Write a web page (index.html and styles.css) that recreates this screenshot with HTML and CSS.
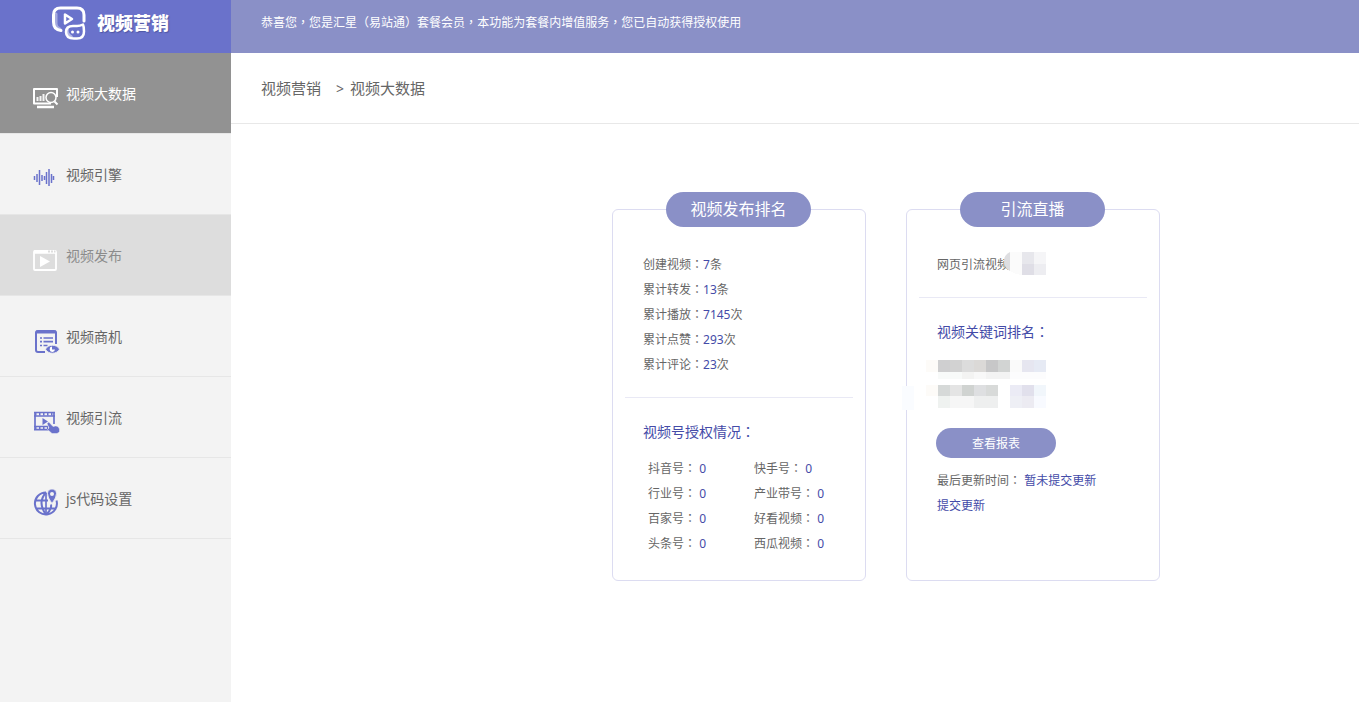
FILE: index.html
```html
<!DOCTYPE html>
<html lang="zh-CN">
<head>
<meta charset="utf-8">
<title>视频营销</title>
<link rel="stylesheet" href="styles.css">
</head>
<body>
<div class="app">
  <aside class="sidebar">
    <div class="brand">
      <svg class="brand-icon" width="36" height="36" viewBox="0 0 36 36" fill="none" stroke="#fff" stroke-width="3" stroke-linecap="round" stroke-linejoin="round">
        <path d="M10 25.500C5 25 2.500 22 2.500 17V10Q2.500 3 9.500 3H26Q33 3 33 10V16" />
        <path d="M5 9v10q0 3 4 5" opacity=".4"/>
        <path d="M14 9.500v9l7-4.500z" stroke-width="2.500"/>
        <path d="M22 21h4q3 0 6-1.500q1 2 1 7q0 7-7 7h-3q-8 0-8-6.500q0-6 7-6z" stroke-width="2.500"/>
        <path d="M16.500 24q-1 5 4 7.500" opacity=".5" stroke-width="2.500"/>
        <circle cx="21.500" cy="27" r="1.500" fill="#fff" stroke="none"/>
        <circle cx="27" cy="27" r="1.500" fill="#fff" stroke="none"/>
      </svg>
      <span class="brand-name">视频营销</span>
    </div>
    <nav class="menu">
      <a class="menu-item active" href="#">
        <svg class="menu-icon" viewBox="0 0 26 26" fill="none" stroke="#fff">
          <path d="M24 12V4H1v14.500h17" stroke-width="2" stroke-linejoin="round"/>
          <path d="M4.500 16v-4M7.500 16v-5M10.500 16V9" stroke-width="2" opacity=".9"/>
          <circle cx="18" cy="12.500" r="5" stroke-width="1.500"/>
          <path d="M21.500 16.500l3 3" stroke-width="2"/>
          <path d="M4 22h17" stroke-width="2.500"/>
        </svg>
        <span>视频大数据</span>
      </a>
      <a class="menu-item" href="#">
        <svg class="menu-icon" viewBox="0 0 26 26" fill="none" stroke="#6a72cb">
          <path d="M1.500 10v4M4 8v8M6.500 4v15M9 9v6M11.500 10v4M13.500 6v12M16 3v17M18.500 8v9M20.500 10v4" stroke-width="1.500"/>
        </svg>
        <span>视频引擎</span>
      </a>
      <a class="menu-item hover" href="#">
        <svg class="menu-icon" viewBox="0 0 26 26" fill="none" stroke="#fff">
          <rect x="1" y="4" width="22" height="19" rx="1" stroke-width="1.800"/>
          <path d="M1 5h22" stroke-width="3.500"/>
          <path d="M15 4.500h2M18 4.500h2M21 4.500h1.500" stroke="#ddd" stroke-width="1.800"/>
          <path d="M7 9v11l10-5.500z" fill="#fff" stroke="none"/>
        </svg>
        <span>视频发布</span>
      </a>
      <a class="menu-item" href="#">
        <svg class="menu-icon" viewBox="0 0 26 26" fill="none" stroke="#6a72cb">
          <path d="M12 24H5q-2 0-2-2V4.500q0-1.500 2-1.500h16q2 0 2 1.500V16" stroke-width="2" stroke-linejoin="round"/>
          <path d="M3 4h20" stroke-width="3"/>
          <path d="M7 10h2M10.500 10h9.500M7 13.700h2M10.500 13.700h9.500M7 17.500h2M10.500 17.500h4" stroke-width="1.700"/>
          <path d="M12.500 21.200C15 16 24 16 26.500 21.200C24 26.500 15 26.500 12.500 21.200z" fill="#6a72cb" stroke="#f3f3f3" stroke-width=".8"/>
          <path d="M19 18.500a2.700 2.700 0 1 0 3 3h-3z" fill="#fff" stroke="none"/>
        </svg>
        <span>视频商机</span>
      </a>
      <a class="menu-item" href="#">
        <svg class="menu-icon" viewBox="0 0 26 26" fill="none" stroke="#6a72cb">
          <path d="M2 3v18M21 3v12M1 3.500h21M1 7h21M1 17.500h14M1 20.700h15" stroke-width="1.700"/>
          <path d="M2 5h19M2 19h13" stroke-width="3" stroke-dasharray="1.500 2.500"/>
          <path d="M9.500 9v7l5.500-3.500z" fill="#6a72cb" stroke="none"/>
          <path d="M14 14.500l1.800-1.500 4.200 4.500q5-2 6.500 2.500v2.500q-1 2-3 2h-4.500l-4.500-4 1.500-1.500z" fill="#6a72cb" stroke="#f3f3f3" stroke-width=".5"/>
        </svg>
        <span>视频引流</span>
      </a>
      <a class="menu-item" href="#">
        <svg class="menu-icon" viewBox="0 0 26 26" fill="none" stroke="#6a72cb">
          <path d="M13 2.500a11 11 0 1 0 10.500 8M2 10.500h13M3 18.500h20M13 2.500q-9 10 0 22M13 24.500q6-5 5-10" stroke-width="2"/>
          <path d="M13 2.500v22" stroke-width="1.700"/>
          <path d="M19-1a4.500 4.500 0 0 1 4.500 4.500Q23.500 7.500 19 13.500Q14.500 7.500 14.500 3.500A4.500 4.500 0 0 1 19-1z" fill="#6a72cb" stroke="#f3f3f3" stroke-width=".8"/>
          <circle cx="19" cy="4" r="2" fill="#f3f3f3" stroke="none"/>
        </svg>
        <span>js代码设置</span>
      </a>
    </nav>
  </aside>

  <div class="content">
    <header class="notice">恭喜您<i lang="zh-TW">，</i>您是汇星<i lang="zh-TW">（</i>易站通<i lang="zh-TW">）</i>套餐会员<i lang="zh-TW">，</i>本功能为套餐内增值服务<i lang="zh-TW">，</i>您已自动获得授权使用</header>
    <nav class="crumbs">
      <a href="#">视频营销</a><span class="sep">&gt;</span><span>视频大数据</span>
    </nav>

    <main class="cards">
      <section class="card">
        <h2 class="card-title">视频发布排名</h2>
        <ul class="stats">
          <li>创建视频<i lang="zh-TW">：</i><b>7</b>条</li>
          <li>累计转发<i lang="zh-TW">：</i><b>13</b>条</li>
          <li>累计播放<i lang="zh-TW">：</i><b>7145</b>次</li>
          <li>累计点赞<i lang="zh-TW">：</i><b>293</b>次</li>
          <li>累计评论<i lang="zh-TW">：</i><b>23</b>次</li>
        </ul>
        <hr>
        <h3>视频号授权情况<i lang="zh-TW">：</i></h3>
        <ul class="accounts">
          <li>抖音号<i lang="zh-TW">：</i> <b>0</b></li><li>快手号<i lang="zh-TW">：</i> <b>0</b></li>
          <li>行业号<i lang="zh-TW">：</i> <b>0</b></li><li>产业带号<i lang="zh-TW">：</i> <b>0</b></li>
          <li>百家号<i lang="zh-TW">：</i> <b>0</b></li><li>好看视频<i lang="zh-TW">：</i> <b>0</b></li>
          <li>头条号<i lang="zh-TW">：</i> <b>0</b></li><li>西瓜视频<i lang="zh-TW">：</i> <b>0</b></li>
        </ul>
      </section>

      <section class="card">
        <h2 class="card-title">引流直播</h2>
        <div class="stats masked">网页引流视频
          <svg class="mask" width="42" height="24" viewBox="0 0 42 24" shape-rendering="crispEdges">
            <path d="M6 0Q0 3 0 9Q0 16 6 19z" fill="#dedee1" shape-rendering="auto"/>
            <path d="M6 0h12v23q-8-1-12-4z" fill="#fbfbfb"/>
            <path d="M18 0h12v12H18z" fill="#e7e7ec"/><path d="M30 0h12v12H30z" fill="#f5f5f7"/>
            <path d="M18 12h12v11H18z" fill="#dfdee6"/><path d="M30 12h12v11H30z" fill="#ededf1"/>
          </svg>
        </div>
        <hr>
        <h3>视频关键词排名<i lang="zh-TW">：</i></h3>
        <svg class="keywords" width="144" height="52" viewBox="0 0 144 52" shape-rendering="crispEdges">
          <path d="M0 30h12v24H0z" fill="#fafcff"/>
          <path d="M24 4h12v12H24zM24 29h12v11H24z" fill="#fdfbf8"/>
          <path d="M36 4h12v12H36z" fill="#cfcfd0"/><path d="M48 4h12v12H48z" fill="#d2d2d2"/>
          <path d="M60 4h12v12H60z" fill="#dcdcdc"/><path d="M72 4h12v12H72z" fill="#dbd9d7"/>
          <path d="M84 4h12v12H84z" fill="#c7c7c8"/><path d="M96 4h12v12H96z" fill="#d2d4d3"/>
          <path d="M108 4h12v12h-12z" fill="#fafafa"/><path d="M120 4h12v12h-12z" fill="#e6e6f0"/><path d="M132 4h12v12h-12z" fill="#e6eaf4"/>
          <path d="M36 16h24v7H36z" fill="#f8faf9"/><path d="M60 16h12v7H60z" fill="#f3f3f2"/><path d="M72 16h12v7H72z" fill="#f8f8f8"/><path d="M84 16h24v7H84z" fill="#f3f3f3"/><path d="M108 16h36v7h-36z" fill="#fcfcfd"/>
          <path d="M36 29h12v11H36z" fill="#d6d9d8"/><path d="M48 29h12v11H48z" fill="#e4e4e4"/>
          <path d="M60 29h12v11H60z" fill="#d0d3d1"/><path d="M72 29h12v11H72z" fill="#dedfe1"/><path d="M84 29h12v11H84z" fill="#d8dad9"/>
          <path d="M108 29h12v11h-12z" fill="#ebebf5"/><path d="M120 29h12v11h-12z" fill="#e1e0ec"/><path d="M132 29h12v11h-12z" fill="#f1f6fb"/>
          <path d="M36 40h12v12H36z" fill="#eff2f0"/><path d="M48 40h24v12H48z" fill="#f6f6f6"/><path d="M72 40h24v12H72z" fill="#eeefef"/>
          <path d="M108 40h12v12h-12z" fill="#eeeff5"/><path d="M120 40h12v12h-12z" fill="#ecebf2"/><path d="M132 40h12v12h-12z" fill="#f8faff"/>
        </svg>
        <button class="report" type="button">查看报表</button>
        <div class="update">
          <p>最后更新时间<i lang="zh-TW">：</i> <b>暂未提交更新</b></p>
          <a href="#">提交更新</a>
        </div>
      </section>
    </main>
  </div>
</div>
</body>
</html>
```
FILE: styles.css
```css
* { box-sizing: border-box; }
body, h2, h3, ul, p { margin: 0; padding: 0; }
body {
  font: 12px/25px "Noto Sans", "Noto Sans CJK SC", sans-serif;
  color: #666;
  background: #fff;
}
ul { list-style: none; }
a { color: inherit; text-decoration: none; }
i { font-family: "Noto Sans CJK TC", sans-serif; font-style: normal; line-height: 1; }
b { font-weight: 400; color: #444ba8; }

.app { display: flex; min-height: 100vh; }
.sidebar { flex: 0 0 231px; background: #f3f3f3; }
.brand {
  display: flex;
  align-items: center;
  gap: 10px;
  height: 53px;
  padding: 0 0 7px 51px;
  background: #6a72cb;
  color: #fff;
}
.brand-name { font-size: 18px; font-weight: 900; text-shadow: 1px 1px 1px #4f57a5; }

.menu-item {
  display: flex;
  align-items: flex-start;
  gap: 7px;
  height: 81px;
  padding: 28px 0 0 33px;
  border-bottom: 1px solid #e6e6e6;
  font-size: 14px;
}
.menu-icon { width: 26px; height: 26px; margin-top: 4px; overflow: visible; }
.menu-item.active { background: #929292; color: #fff; }
.menu-item.hover { background: #ddd; color: #8c8c8c; }

.content { flex: 1; min-width: 0; }
.notice {
  height: 53px;
  padding: 10px 30px;
  background: #8a90c7;
  color: #fff;
}
.crumbs {
  display: flex;
  align-items: center;
  height: 71px;
  padding: 0 30px;
  border-bottom: 1px solid #e8e8e8;
  font-size: 15px;
}
.sep { margin: 0 6px 0 15px; font-size: 14px; }

.cards {
  display: flex;
  flex-wrap: wrap;
  gap: 40px;
  padding: 85px 20px 40px 381px;
}
.card {
  position: relative;
  width: 254px;
  padding: 42px 0 24px;
  border: 1px solid #dcdcf1;
  border-radius: 6px;
}
.card-title {
  position: absolute;
  top: -18px;
  left: 53px;
  width: 145px;
  border-radius: 18px;
  background: #8a90c7;
  color: #fff;
  font-size: 16px;
  font-weight: 400;
  line-height: 35px;
  text-align: center;
}
.stats, .update { padding: 0 30px; }
.card hr { margin: 20px 12px; border: 0; border-top: 1px solid #e9e9f5; }
.card h3 {
  margin-bottom: 10px;
  padding: 0 30px;
  color: #444ba8;
  font-size: 14px;
  font-weight: 400;
  line-height: 28px;
}
.accounts {
  display: grid;
  grid-template-columns: 106px 1fr;
  padding-left: 35px;
}
.masked { position: relative; }
.mask { position: absolute; top: 0; left: 97px; }
.keywords { display: block; margin-left: -5px; overflow: visible; }
.report {
  display: block;
  width: 120px;
  height: 30px;
  margin: 20px 0 10px 29px;
  padding: 0;
  border: 0;
  border-radius: 15px;
  background: #8a90c7;
  color: #fff;
  font: inherit;
}
.update a { color: #444ba8; }
```
